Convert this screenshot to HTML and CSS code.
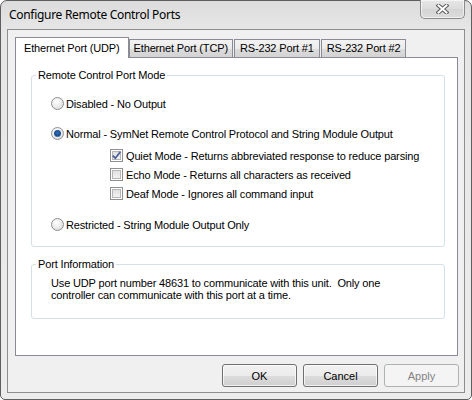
FILE: index.html
```html
<!DOCTYPE html>
<html lang="en">

<head>
  <meta charset="UTF-8">
  <title>Configure Remote Control Ports</title>
  <link rel="stylesheet" href="styles.css">
</head>

<body>

  <div class="window">
    <!-- Title Bar -->
    <div class="titlebar">
      <span class="title">Configure Remote Control Ports</span>
      <button class="close-btn" type="button">
        <svg width="13" height="10" viewBox="0 0 13 10">
          <path d="M2.5 1.5 L10.5 8.5 M10.5 1.5 L2.5 8.5" stroke="#5b5b5b" stroke-width="4" stroke-linecap="square" />
          <path d="M2.5 1.5 L10.5 8.5 M10.5 1.5 L2.5 8.5" stroke="#fff" stroke-width="2" stroke-linecap="square" />
        </svg>
      </button>
    </div>

    <div class="client">
      <!-- Tabs -->
      <div class="tabs">
        <div class="tab-strip">
          <div class="tab active">Ethernet Port (UDP)</div>
          <div class="tab">Ethernet Port (TCP)</div>
          <div class="tab">RS-232 Port #1</div>
          <div class="tab">RS-232 Port #2</div>
        </div>

        <div class="tab-panel">
          <!-- Port Mode -->
          <fieldset class="group">
            <legend>Remote Control Port Mode</legend>
            <div class="group-body mode-body">
              <div class="option"><span class="radio"></span>Disabled - No Output</div>
              <div class="option opt-normal"><span class="radio checked"></span>Normal - SymNet Remote Control Protocol and String Module Output</div>
              <div class="sub-options">
                <div class="option">
                  <span class="check">
                    <svg width="11" height="11" viewBox="0 0 11 11">
                      <path d="M1.8 5.6 L4.3 8.2 L9.4 1.8" fill="none" stroke="#4a5f97" stroke-width="1.7" />
                    </svg>
                  </span>Quiet Mode - Returns abbreviated response to reduce parsing
                </div>
                <div class="option"><span class="check"></span>Echo Mode - Returns all characters as received</div>
                <div class="option"><span class="check"></span>Deaf Mode - Ignores all command input</div>
              </div>
              <div class="option opt-restricted"><span class="radio"></span>Restricted - String Module Output Only</div>
            </div>
          </fieldset>

          <!-- Port Info -->
          <fieldset class="group group-info">
            <legend>Port Information</legend>
            <div class="group-body info-body">
              <p>Use UDP port number 48631 to communicate with this unit.&nbsp; Only one<br>controller can communicate with this port at a time.</p>
            </div>
          </fieldset>
        </div>
      </div>

      <!-- Dialog Buttons -->
      <div class="buttons">
        <button class="btn" type="button">OK</button>
        <button class="btn" type="button">Cancel</button>
        <button class="btn" type="button" disabled>Apply</button>
      </div>
    </div>
  </div>

</body>

</html>
```

FILE: styles.css
```css
/* General Page Styles */
body {
  margin: 0;
  background: #fff;
  font-family: 'Liberation Sans', Arial, sans-serif;
  font-size: 11px;
  letter-spacing: -0.15px;
  color: #000;
}

/* Window Frame */
.window {
  width: 472px;
  height: 400px;
  box-sizing: border-box;
  border: 1px solid #5e5e5e;
  border-radius: 7px 7px 5px 5px;
  background: linear-gradient(#dcdcdc, #e6e6e6 28px, #ececec);
  padding: 0 6px 6px;
  display: flex;
  flex-direction: column;
}

.titlebar {
  height: 28px;
  display: flex;
  align-items: flex-start;
  justify-content: space-between;
}

.title {
  font-family: 'Noto Sans', sans-serif;
  font-size: 12px;
  letter-spacing: -0.3px;
  padding: 5px 0 0 2px;
}

.close-btn {
  width: 45px;
  height: 19px;
  margin: -1px 0 0 0;
  padding: 0;
  border: 1px solid #8a8a8a;
  border-top: 0;
  border-radius: 0 0 5px 5px;
  background: linear-gradient(#e6e6e6, #dcdcdc 50%, #d4d4d4 50%, #dcdcdc);
  box-shadow: inset 0 0 0 1px rgba(255, 255, 255, 0.6);
  display: flex;
  align-items: center;
  justify-content: center;
}

/* Client Area */
.client {
  flex: 1;
  border: 1px solid #8e8e8e;
  background: #f0f0f0;
  padding: 7px 6px 5px 7px;
  display: flex;
  flex-direction: column;
}

/* Tab Control */
.tabs {
  flex: 1;
  display: flex;
  flex-direction: column;
}

.tab-strip {
  display: flex;
  align-items: flex-end;
  height: 20px;
}

.tab {
  height: 17px;
  line-height: 17px;
  padding: 0 4px;
  border: 1px solid #898c95;
  border-bottom: 0;
  background: linear-gradient(#f3f3f3, #ebebeb 50%, #dddddd 50%, #d3d3d3);
  white-space: nowrap;
}

.tab:not(.active) + .tab {
  margin-left: 1px;
  padding: 0 5px;
}

.tab.active {
  height: 20px;
  line-height: 20px;
  padding: 0 8px;
  margin-bottom: -1px;
  background: #fff;
  position: relative;
  z-index: 1;
}

.tab-panel {
  flex: 1;
  background: #fff;
  border: 1px solid #898c95;
  padding: 11px 12px 0 15px;
}

/* Group Boxes */
.group {
  margin: 0;
  padding: 0;
  border: 1px solid #d5dfe5;
  border-radius: 3px;
}

.group legend {
  margin-left: 4px;
  padding: 0 2px;
  line-height: 13px;
}

.group-info {
  margin-top: 11px;
}

.mode-body {
  padding: 12px 0 12px 19px;
}

.info-body {
  padding: 6px 0 17px 19px;
}

.info-body p {
  margin: 0;
  line-height: 12px;
}

/* Options */
.option {
  display: flex;
  align-items: center;
  gap: 2px;
  height: 19px;
  white-space: nowrap;
}

.opt-normal {
  margin-top: 11px;
}

.sub-options {
  margin: 3px 0 0 59px;
}

.opt-restricted {
  margin-top: 12px;
}

.radio {
  width: 13px;
  height: 13px;
  box-sizing: border-box;
  border: 1px solid #8f8f8f;
  border-radius: 50%;
  background: radial-gradient(circle at 40% 35%, #fff, #e6e6e6 60%, #cfcfcf);
  display: flex;
  align-items: center;
  justify-content: center;
}

.radio.checked::after {
  content: '';
  width: 7px;
  height: 7px;
  border-radius: 50%;
  background: radial-gradient(circle at 50% 40%, #2f6fc0, #1b4a8c 55%, #7fb0e4 100%);
}

.check {
  width: 13px;
  height: 13px;
  box-sizing: border-box;
  border: 1px solid #8f8f8f;
  background: linear-gradient(#dcdcdc, #f6f6f6);
  box-shadow: inset 0 0 0 1px #fff, inset 0 0 0 2px #b5b5b5;
  display: flex;
  align-items: center;
  justify-content: center;
  margin-right: 1px;
}

/* Dialog Buttons */
.buttons {
  display: flex;
  justify-content: flex-end;
  gap: 6px;
  margin: 8px -1px 0 0;
}

.btn {
  width: 75px;
  height: 23px;
  padding: 0;
  border: 1px solid #707070;
  border-radius: 3px;
  background: linear-gradient(#f2f2f2, #ebebeb 50%, #dddddd 50%, #cfcfcf);
  box-shadow: inset 0 0 0 1px rgba(255, 255, 255, 0.7);
  font-family: 'Liberation Sans', Arial, sans-serif;
  font-size: 11px;
  color: #000;
}

.btn:disabled {
  border-color: #adb2b5;
  background: #f4f4f4;
  box-shadow: none;
  color: #838383;
}
```
